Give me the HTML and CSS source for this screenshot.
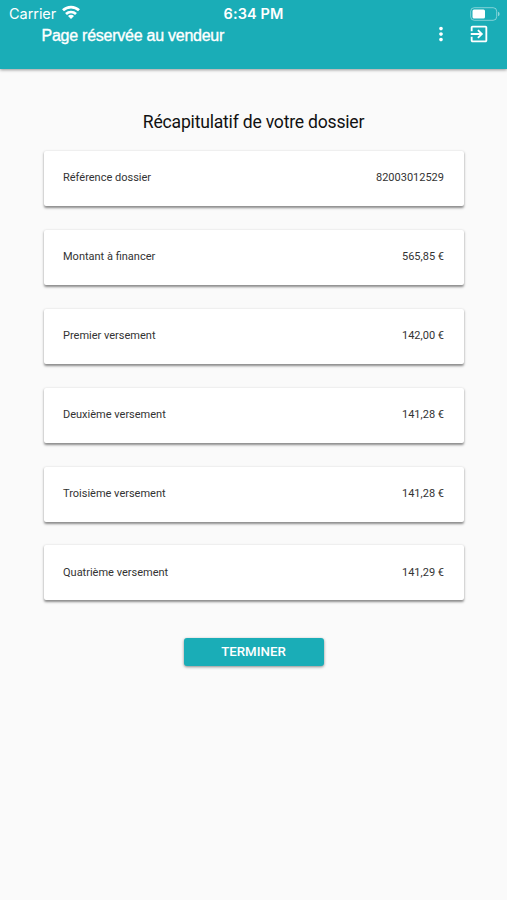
FILE: index.html
```html
<!DOCTYPE html>
<html lang="fr">
<head>
    <meta charset="UTF-8">
    <meta name="viewport" content="width=device-width, initial-scale=1.0">
    <title>Page réservée au vendeur</title>
    <link rel="stylesheet" href="styles.css">
</head>
<body>
    <header class="header">
        <div class="status">
            <div class="carrier">
                <span>Carrier</span>
                <svg class="wifi" viewBox="0 0 18 14" fill="none" stroke="#fff" stroke-width="2.7">
                    <path d="M1 5.3a11.5 11.5 0 0 1 16 0"/>
                    <path d="M4 9a7.3 7.3 0 0 1 10 0"/>
                    <path d="M9 14L6 11a4.2 4.2 0 0 1 6 0z" fill="#fff" stroke="none"/>
                </svg>
            </div>
            <div class="time">6:34 PM</div>
            <svg class="battery" viewBox="0 0 30 14">
                <rect x="0.7" y="0.7" width="26" height="12.6" rx="3.6" fill="none" stroke="#fff" stroke-opacity="0.45"/>
                <rect x="2.5" y="2.5" width="12.5" height="9" rx="1.5" fill="#fff"/>
                <path d="M28 4.8v4.4a2.3 2.3 0 0 0 0-4.4z" fill="#fff" fill-opacity="0.5"/>
            </svg>
        </div>
        <div class="toolbar">
            <div class="title">Page réservée au vendeur</div>
            <svg class="icon" viewBox="0 0 24 24">
                <path d="M12 8c1.1 0 2-.9 2-2s-.9-2-2-2-2 .9-2 2 .9 2 2 2zm0 2c-1.1 0-2 .9-2 2s.9 2 2 2 2-.9 2-2-.9-2-2-2zm0 6c-1.1 0-2 .9-2 2s.9 2 2 2 2-.9 2-2-.9-2-2-2z"/>
            </svg>
            <svg class="icon exit" viewBox="0 0 24 24">
                <path d="M10.09 15.59L11.5 17l5-5-5-5-1.41 1.41L12.67 11H3v2h9.67l-2.58 2.59zM19 3H5c-1.11 0-2 .9-2 2v4h2V5h14v14H5v-4H3v4c0 1.1.89 2 2 2h14c1.1 0 2-.9 2-2V5c0-1.1-.9-2-2-2z"/>
            </svg>
        </div>
    </header>
    <main class="content">
        <h1 class="heading">Récapitulatif de votre dossier</h1>
        <div class="list">
            <div class="card"><span>Référence dossier</span><span>82003012529</span></div>
            <div class="card"><span>Montant à financer</span><span>565,85 €</span></div>
            <div class="card"><span>Premier versement</span><span>142,00 €</span></div>
            <div class="card"><span>Deuxième versement</span><span>141,28 €</span></div>
            <div class="card"><span>Troisième versement</span><span>141,28 €</span></div>
            <div class="card"><span>Quatrième versement</span><span>141,29 €</span></div>
        </div>
        <button class="finish">TERMINER</button>
    </main>
</body>
</html>
```
FILE: styles.css
```css
body{
    margin:0;
    min-height:100vh;
    background-color:#fafafa;
    color:#333;
    font-family:Roboto, sans-serif;
}
.header{
    box-sizing:border-box;
    height:69px;
    background-color:#1aadb7;
    color:white;
    box-shadow:0 1px 3px rgba(0,0,0,0.4);
}
.status{
    height:27px;
    padding:0 7px 0 9px;
    display:grid;
    grid-template-columns:1fr auto 1fr;
    align-items:center;
    font-family:Inter, sans-serif;
    font-size:14.5px;
}
.carrier{
    display:flex;
    align-items:center;
    gap:6px;
    letter-spacing:-0.05px;
}
.wifi{
    width:18px;
    height:14px;
    margin-top:-3px;
}
.time{
    margin-right:2px;
    font-weight:600;
    letter-spacing:0.1px;
}
.battery{
    width:30px;
    height:14px;
    justify-self:end;
}
.toolbar{
    height:17px;
    padding:0 17.5px 0 41.5px;
    display:flex;
    align-items:center;
}
.title{
    flex:1;
    font-family:"Liberation Sans", sans-serif;
    font-size:16px;
    letter-spacing:-0.25px;
    -webkit-text-stroke:0.35px white;
}
.icon{
    width:22px;
    height:22px;
    margin-top:-3px;
    fill:white;
}
.exit{
    margin-left:16px;
}
.content{
    padding:42px 43px 0;
    display:flex;
    flex-direction:column;
    align-items:center;
}
.heading{
    margin:0;
    color:#111;
    font-size:17.6px;
    font-weight:400;
    line-height:22px;
    letter-spacing:-0.22px;
}
.list{
    width:420px;
    margin-top:18px;
    display:grid;
    gap:23.9px;
}
.card{
    box-sizing:border-box;
    height:55px;
    padding:0 19.5px 1.5px;
    display:flex;
    align-items:center;
    justify-content:space-between;
    background-color:white;
    border-radius:2px;
    box-shadow:0 1.5px 2.5px rgba(0,0,0,0.45);
    font-size:11px;
}
.finish{
    width:140px;
    height:28px;
    margin-top:37.5px;
    padding:0;
    border:none;
    border-radius:3px;
    background-color:#1aadb7;
    color:white;
    box-shadow:0 1px 3px rgba(0,0,0,0.45);
    font-family:Roboto, sans-serif;
    font-size:13.3px;
    font-weight:500;
}
```
